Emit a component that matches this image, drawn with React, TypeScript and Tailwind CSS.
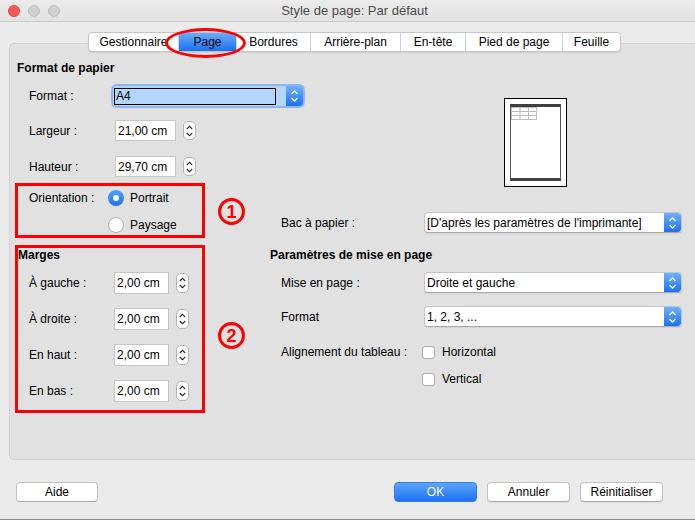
const TABS = [
  { label: 'Gestionnaire', w: 'w-[89px]' },
  { label: 'Page', w: 'w-[58px]', active: true },
  { label: 'Bordures', w: 'w-[74px]' },
  { label: 'Arrière-plan', w: 'w-[90px]' },
  { label: 'En-tête', w: 'w-[65px]' },
  { label: 'Pied de page', w: 'w-[97px]' },
  { label: 'Feuille', w: 'w-[58px]' }
];

const MARGES = [
  { label: 'À gauche :', value: '2,00 cm' },
  { label: 'À droite :', value: '2,00 cm' },
  { label: 'En haut :', value: '2,00 cm' },
  { label: 'En bas :', value: '2,00 cm' }
];

// blue up/down part of a popup button
function BlueStepper() {
  return (
    <div className="w-[17px] h-full shrink-0 rounded-r-[3px] bg-linear-to-b from-[#6db0fb] to-[#1b70f2] flex items-center justify-center">
      <svg width="9" height="14" viewBox="0 0 9 14">
        <path d="M1.5 5 L4.5 2 L7.5 5 M1.5 9 L4.5 12 L7.5 9" fill="none" stroke="#fff" strokeWidth="1.3" />
      </svg>
    </div>
  );
}

// grey pill spinner next to number fields
function Spin({ h }: { h: string }) {
  return (
    <div className={`w-[13px] ${h} shrink-0 bg-white border border-[#b4b4b4] rounded-[5px] flex items-center justify-center`}>
      <svg width="9" height="16" viewBox="0 0 9 16">
        <path d="M1.8 6 L4.5 3.3 L7.2 6 M1.8 10 L4.5 12.7 L7.2 10" fill="none" stroke="#2e2e2e" strokeWidth="1.1" />
      </svg>
    </div>
  );
}

function Select({ value, w }: { value: string; w: string }) {
  return (
    <div className={`flex ${w} h-[21px] shrink-0 bg-white border border-[#c4c4c4] border-b-[#a9a9a9] rounded-[4px] shadow-[0_1px_1px_rgba(0,0,0,0.06)] overflow-hidden`}>
      <div className="flex-1 pl-[2px] flex items-center">{value}</div>
      <BlueStepper />
    </div>
  );
}

function NumField({ value, w, h, gap }: { value: string; w: string; h: string; gap: string }) {
  return (
    <div className="flex items-center">
      <div className={`${w} ${h} bg-white border border-[#c6c6c6] flex items-center pl-[2px]`}>{value}</div>
      <div className={gap}>
        <Spin h={h === 'h-[22px]' ? 'h-[20px]' : 'h-[19px]'} />
      </div>
    </div>
  );
}

function Circled({ n }: { n: string }) {
  return (
    <div className="w-[27px] h-[27px] rounded-full border-[3px] border-[#ff0000] flex items-center justify-center text-[#ff0000] text-[18px] font-bold leading-none">
      {n}
    </div>
  );
}

function Button({ label, primary }: { label: string; primary?: boolean }) {
  return (
    <div
      className={`w-[83px] h-[20px] rounded-[4px] flex items-center justify-center ${
        primary
          ? 'bg-linear-to-b from-[#5ea5fa] to-[#1c6ff3] text-white border border-[#2f7ff0]'
          : 'bg-white border border-[#c3c3c3] border-b-[#a8a8a8] shadow-[0_1px_1px_rgba(0,0,0,0.06)]'
      }`}
    >
      {label}
    </div>
  );
}

export default function App() {
  return (
    <div className="w-[695px] h-[520px] overflow-hidden bg-[#ebebeb] text-[12px] text-black font-['Liberation_Sans',Arial,sans-serif] border-b border-[#8a8a8a]">
      <div className="w-[705px] flex flex-col">
        {/* Title bar */}
        <div className="relative h-[22px] bg-linear-to-b from-[#ececec] to-[#e1e1e1] border-b border-[#c9c9c9] flex items-center">
          <div className="flex gap-[8px] pl-[8px]">
            <div className="w-[12px] h-[12px] rounded-full bg-[#fc5753] border border-[#df4744]" />
            <div className="w-[12px] h-[12px] rounded-full bg-[#d0d0d0] border border-[#bdbdbd]" />
            <div className="w-[12px] h-[12px] rounded-full bg-[#d0d0d0] border border-[#bdbdbd]" />
          </div>
          <div className="flex-1 text-center text-[13px] text-[#4b4b4b] pr-[56px]">Style de page: Par défaut</div>
        </div>

        {/* Tabs */}
        <div className="relative z-10 mt-[10px] ml-[88px] flex h-[20px] w-fit bg-white border border-[#c6c6c6] rounded-[4px] shadow-[0_1px_1px_rgba(0,0,0,0.08)]">
          {TABS.map((t, i) => (
            <div
              key={t.label}
              className={`${t.w} h-full flex items-center justify-center ${i > 0 ? 'border-l border-[#d2d2d2]' : ''} ${
                t.active ? 'bg-linear-to-b from-[#68adfa] to-[#1a70f2] text-black' : ''
              }`}
            >
              {t.label}
            </div>
          ))}
          <div className="absolute left-[76px] top-[-5px] w-[81px] h-[30px] rounded-[50%] border-[3px] border-[#ff0000]" />
        </div>

        {/* Tab content panel */}
        <div className="-mt-[9px] ml-[9px] h-[417px] bg-[#e1e1e1] border border-r-0 border-[#d2d2d2] rounded-l-[5px] pl-[5px] pt-[17px] flex">
          {/* left column */}
          <div className="w-[190px] shrink-0">
            <div className="h-[14px] leading-[14px] pl-[2px] font-bold">Format de papier</div>
            <div className="mt-[11px] h-[20px] flex items-center">
              <div className="w-[98px] shrink-0 pl-[14px]">Format :</div>
              <div className="flex w-[190px] h-[20px] shrink-0 bg-[#b4d5fe] rounded-[4px] shadow-[0_0_0_2px_#8ab6f2] overflow-hidden">
                <div className="flex-1 flex items-center pl-[1px]">
                  <div className="w-[162px] h-[17px] border border-black flex items-center pl-[1px]">A4</div>
                </div>
                <BlueStepper />
              </div>
            </div>
            <div className="mt-[14px] h-[21px] flex items-center">
              <div className="w-[100px] shrink-0 pl-[14px]">Largeur :</div>
              <NumField value="21,00 cm" w="w-[61px]" h="h-[21px]" gap="ml-[7px]" />
            </div>
            <div className="mt-[15px] h-[21px] flex items-center">
              <div className="w-[100px] shrink-0 pl-[14px]">Hauteur :</div>
              <NumField value="29,70 cm" w="w-[61px]" h="h-[21px]" gap="ml-[7px]" />
            </div>

            {/* Orientation box */}
            <div className="mt-[6px] h-[55px] border-[3px] border-[#ff0000] pl-[11px] pt-[4px]">
              <div className="h-[16px] flex items-center">
                <div className="w-[79px] shrink-0">Orientation :</div>
                <div className="w-[16px] h-[16px] rounded-full bg-linear-to-b from-[#55a2fa] to-[#1c70f2] flex items-center justify-center">
                  <div className="w-[6px] h-[6px] rounded-full bg-white" />
                </div>
                <div className="ml-[6px]">Portrait</div>
              </div>
              <div className="mt-[11px] h-[16px] flex items-center pl-[79px]">
                <div className="w-[16px] h-[16px] rounded-full bg-white border border-[#b2b2b2]" />
                <div className="ml-[6px]">Paysage</div>
              </div>
            </div>

            {/* Marges box */}
            <div className="mt-[7px] h-[168px] border-[3px] border-[#ff0000]">
              <div className="h-[14px] leading-[14px] font-bold">Marges</div>
              <div className="mt-[10px] flex flex-col gap-[14px]">
                {MARGES.map((m) => (
                  <div key={m.label} className="h-[22px] flex items-center pl-[11px]">
                    <div className="w-[85px] shrink-0">{m.label}</div>
                    <NumField value={m.value} w="w-[55px]" h="h-[22px]" gap="ml-[7px]" />
                  </div>
                ))}
              </div>
            </div>
          </div>

          {/* annotations */}
          <div className="w-[65px] shrink-0 pl-[13px]">
            <div className="mt-[137px]">
              <Circled n="1" />
            </div>
            <div className="mt-[97px]">
              <Circled n="2" />
            </div>
          </div>

          {/* right column */}
          <div className="flex-1">
            <div className="mt-[37px] ml-[234px] w-[63px] h-[89px] bg-white border border-black pl-[5px] pt-[5px]">
              <div className="w-[51px] h-[77px] border-x border-[#555] border-t-[3px] border-b-[3px] border-t-[#3f3f3f] border-b-[#3f3f3f]">
                <svg width="26" height="13" viewBox="0 0 26 13" className="block">
                  <rect x="0.5" y="0.5" width="25" height="12" fill="#fff" stroke="#bdbdbd" />
                  <path d="M9 0 V13 M17.5 0 V13 M0 4.5 H26 M0 8.5 H26" stroke="#bdbdbd" strokeWidth="1" />
                </svg>
              </div>
            </div>

            <div className="mt-[25px] h-[21px] flex items-center">
              <div className="w-[154px] shrink-0 pl-[11px]">Bac à papier :</div>
              <Select value="[D'après les paramètres de l'imprimante]" w="w-[258px]" />
            </div>

            <div className="mt-[15px] h-[14px] leading-[14px] font-bold">Paramètres de mise en page</div>

            <div className="mt-[10px] h-[21px] flex items-center">
              <div className="w-[154px] shrink-0 pl-[11px]">Mise en page :</div>
              <Select value="Droite et gauche" w="w-[258px]" />
            </div>
            <div className="mt-[13px] h-[21px] flex items-center">
              <div className="w-[154px] shrink-0 pl-[11px]">Format</div>
              <Select value="1, 2, 3, ..." w="w-[258px]" />
            </div>

            <div className="mt-[18px] h-[14px] flex items-center">
              <div className="w-[152px] shrink-0 pl-[11px]">Alignement du tableau :</div>
              <div className="w-[13px] h-[13px] bg-white border border-[#ababab] rounded-[3px]" />
              <div className="ml-[7px]">Horizontal</div>
            </div>
            <div className="mt-[13px] h-[14px] flex items-center pl-[152px]">
              <div className="w-[13px] h-[13px] bg-white border border-[#ababab] rounded-[3px]" />
              <div className="ml-[7px]">Vertical</div>
            </div>
          </div>
        </div>

        {/* bottom buttons */}
        <div className="mt-[22px] h-[20px] flex items-center">
          <div className="ml-[16px] w-[82px] h-[20px] rounded-[4px] bg-white border border-[#c3c3c3] border-b-[#a8a8a8] flex items-center justify-center">
            Aide
          </div>
          <div className="ml-auto mr-[42px] flex gap-[10px]">
            <Button label="OK" primary />
            <Button label="Annuler" />
            <Button label="Réinitialiser" />
          </div>
        </div>
      </div>
    </div>
  );
}
